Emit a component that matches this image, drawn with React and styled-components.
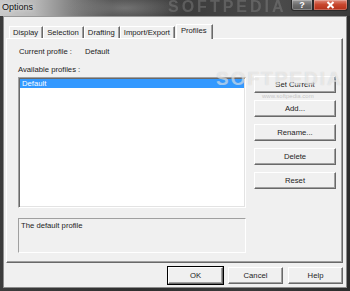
import React from "react";
import styled, { createGlobalStyle } from "styled-components";

const Global = createGlobalStyle`
  html, body { margin: 0; padding: 0; background: #2b2b2b; }
  body { font-family: "Liberation Sans", Arial, sans-serif; font-size: 7.7px; color: #1c1c1c; }
  * { box-sizing: border-box; }
`;

const Window = styled.div`
  position: relative;
  width: 350px;
  height: 291px;
  overflow: hidden;
  display: flex;
  flex-direction: column;
  background: linear-gradient(90deg, #3c3c3c 0%, #2f2f2f 40%, #3a3a3a 70%, #2c2c2c 100%);
`;

const TitleBar = styled.div`
  position: relative;
  height: 16px;
  display: flex;
  align-items: flex-start;
  background:
    radial-gradient(ellipse 60px 14px at 125px 8px, rgba(150,150,150,0.55), rgba(150,150,150,0) 100%),
    linear-gradient(90deg, #c9c9c9 0%, #b8b8b8 10%, #7a7a7a 22%, #484848 32%, #3d3d3d 55%, #4a4a4a 80%, #3b3b3b 100%);
`;

const Title = styled.span`
  font-size: 9px;
  line-height: 12px;
  padding: 1px 0 0 2px;
  color: #111;
  text-shadow: 0 0 4px rgba(255,255,255,0.9);
`;

const TitleMark = styled.span`
  position: absolute;
  left: 168px;
  top: -2px;
  font-size: 16px;
  font-weight: bold;
  letter-spacing: 3px;
  color: rgba(140,140,140,0.4);
  filter: blur(0.6px);
`;

const CaptionButtons = styled.div`
  margin-left: auto;
  display: flex;
  margin-right: 2px;
`;

const CaptionButton = styled.div`
  width: ${p => p.$w}px;
  height: 11px;
  display: flex;
  align-items: center;
  justify-content: center;
  color: #fff;
  font-size: 9px;
  font-weight: bold;
  border: 1px solid #2a2a2a;
  border-top: none;
  border-radius: ${p => p.$r};
  background: ${p => p.$red
    ? "linear-gradient(180deg, #e08a7a 0%, #c8472e 45%, #b32f18 100%)"
    : "linear-gradient(180deg, #9a9a9a 0%, #6c6c6c 50%, #5a5a5a 100%)"};
  box-shadow: inset 0 0 0 1px rgba(255,255,255,0.25);
`;

const Client = styled.div`
  flex: 1;
  margin: 0 3px 3px 3px;
  background: #f0f0f0;
  border: 1px solid #8c8c8c;
  border-top-color: #9a9a9a;
  padding: 7px 3px 0 2px;
  display: flex;
  flex-direction: column;
`;

const TabStrip = styled.div`
  height: 14px;
  display: flex;
  align-items: flex-end;
  padding-left: 3px;
`;

const Tab = styled.div`
  position: relative;
  height: ${p => (p.$active ? 15 : 12)}px;
  margin-bottom: ${p => (p.$active ? -1 : 0)}px;
  margin-left: ${p => (p.$active ? 1 : 0)}px;
  padding: ${p => (p.$active ? "1px 5px 0 4px" : "1px 4px 0 3px")};
  z-index: ${p => (p.$active ? 2 : 1)};
  background: #f0f0f0;
  border-top: 1px solid #ffffff;
  border-left: 1px solid #ffffff;
  border-right: 1px solid #696969;
  box-shadow: inset -1px 0 0 #a0a0a0;
  line-height: 10px;
  white-space: nowrap;
`;

const Panel = styled.div`
  height: 225px;
  border-top: 1px solid #ffffff;
  border-left: 1px solid #ffffff;
  border-right: 1px solid #696969;
  border-bottom: 1px solid #696969;
  box-shadow: inset -1px -1px 0 #a0a0a0;
  padding: 8px 0 0 11px;
  display: flex;
  flex-direction: column;
`;

const InfoRow = styled.div`
  display: flex;
  height: 10px;
  line-height: 10px;
  padding-left: 1px;
`;

const InfoLabel = styled.span`
  width: 66px;
`;

const MainRow = styled.div`
  margin-top: 8px;
  display: flex;
  gap: 8px;
`;

const LeftCol = styled.div`
  width: 228px;
  display: flex;
  flex-direction: column;
`;

const FieldLabel = styled.div`
  height: 10px;
  line-height: 10px;
  margin-bottom: 2px;
`;

const ListBox = styled.div`
  height: 131px;
  background: #fff;
  border-top: 1px solid #a0a0a0;
  border-left: 1px solid #a0a0a0;
  border-right: 1px solid #ffffff;
  border-bottom: 1px solid #ffffff;
  box-shadow: inset 1px 1px 0 #696969, inset -1px -1px 0 #e3e3e3;
  padding: 1px;
`;

const ListItem = styled.div`
  height: 9px;
  line-height: 9px;
  padding-left: 2px;
  background: ${p => (p.$selected ? "#3399ff" : "transparent")};
  color: ${p => (p.$selected ? "#fff" : "#000")};
`;

const DescBox = styled.div`
  margin-top: 10px;
  height: 35px;
  border-top: 1px solid #a0a0a0;
  border-left: 1px solid #a0a0a0;
  border-right: 1px solid #ffffff;
  border-bottom: 1px solid #ffffff;
  padding: 2px 0 0 2px;
  line-height: 10px;
`;

const RightCol = styled.div`
  width: 82px;
  padding-top: 11px;
  display: flex;
  flex-direction: column;
  gap: 7px;
`;

const Button = styled.div`
  width: ${p => p.$w}px;
  height: 17px;
  display: flex;
  align-items: center;
  justify-content: center;
  background: #f0f0f0;
  border-top: 1px solid #ffffff;
  border-left: 1px solid #ffffff;
  border-right: 1px solid #696969;
  border-bottom: 1px solid #696969;
  box-shadow: inset -1px -1px 0 #a0a0a0;
  outline: ${p => (p.$default ? "1px solid #000" : "none")};
  line-height: 10px;
`;

const Footer = styled.div`
  margin-top: 4px;
  display: flex;
  justify-content: flex-end;
  gap: 5px;
`;

const Watermark = styled.div`
  position: absolute;
  left: 216px;
  top: 68px;
  font-size: 19px;
  font-weight: bold;
  letter-spacing: 2px;
  color: rgba(255,255,255,0.5);
  text-shadow: 0 0 1px rgba(120,120,120,0.3);
  pointer-events: none;
`;

const WatermarkUrl = styled.div`
  position: absolute;
  left: 262px;
  top: 93px;
  font-size: 6px;
  color: rgba(150,150,150,0.5);
  pointer-events: none;
`;

const tabs = ["Display", "Selection", "Drafting", "Import/Export", "Profiles"];
const actions = ["Set Current", "Add...", "Rename...", "Delete", "Reset"];

export default function App() {
  return (
    <>
      <Global />
      <Window>
        <TitleBar>
          <Title>Options</Title>
          <TitleMark>SOFTPEDIA</TitleMark>
          <CaptionButtons>
            <CaptionButton $w={22} $r="0 0 0 3px">?</CaptionButton>
            <CaptionButton $w={35} $red $r="0 0 3px 0">
              <svg width="9" height="8" viewBox="0 0 9 8">
                <path d="M1.5 1 L7.5 7 M7.5 1 L1.5 7" stroke="#fff" strokeWidth="2" />
              </svg>
            </CaptionButton>
          </CaptionButtons>
        </TitleBar>
        <Client>
          <TabStrip>
            {tabs.map(t => (
              <Tab key={t} $active={t === "Profiles"}>{t}</Tab>
            ))}
          </TabStrip>
          <Panel>
            <InfoRow>
              <InfoLabel>Current profile :</InfoLabel>
              <span>Default</span>
            </InfoRow>
            <MainRow>
              <LeftCol>
                <FieldLabel>Available profiles :</FieldLabel>
                <ListBox>
                  <ListItem $selected>Default</ListItem>
                </ListBox>
                <DescBox>The default profile</DescBox>
              </LeftCol>
              <RightCol>
                {actions.map(a => (
                  <Button key={a} $w={82}>{a}</Button>
                ))}
              </RightCol>
            </MainRow>
          </Panel>
          <Footer>
            <Button $w={55} $default>OK</Button>
            <Button $w={55}>Cancel</Button>
            <Button $w={55}>Help</Button>
          </Footer>
        </Client>
        <Watermark>SOFTPEDIA</Watermark>
        <WatermarkUrl>www.softpedia.com</WatermarkUrl>
      </Window>
    </>
  );
}
